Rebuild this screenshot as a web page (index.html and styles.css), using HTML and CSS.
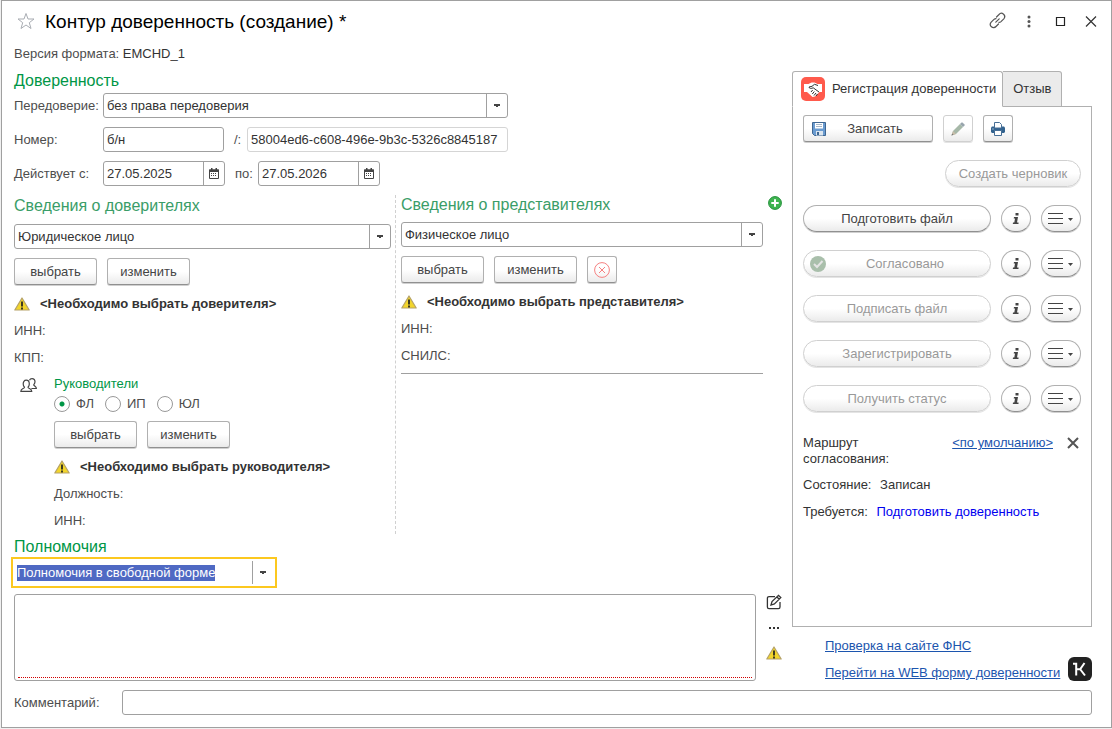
FILE: index.html
```
<!DOCTYPE html>
<html lang="ru">
<head>
  <meta charset="UTF-8" />
  <meta name="viewport" content="width=device-width, initial-scale=1.0"/>
  <title>Контур доверенность (создание)</title>
  <link rel="stylesheet" href="styles.css">
</head>
<body>

  <!-- Shared icons -->
  <svg class="sprite" aria-hidden="true">
    <symbol id="warning" viewBox="0 0 16 14">
      <path d="M8 1 L15.2 13 H.8 Z" fill="#f2d52b" stroke="#b5a268" stroke-width="1.2" stroke-linejoin="round"/>
      <path d="M7 4.5h2v5H7zM7 10.5h2v2H7z" fill="#3d3a20"/>
    </symbol>
    <symbol id="calendar" viewBox="0 0 10 11">
      <path d="M.5 2h9v8.5h-9z" fill="none" stroke="#444"/>
      <path d="M0 1.5h10V4H0zM2 0h1.5v2H2zM6.5 0H8v2H6.5z" fill="#444"/>
      <path d="M2 5.5h6M2 7.5h6" stroke="#444" stroke-dasharray="1 1"/>
    </symbol>
    <symbol id="info" viewBox="0 0 8 13">
      <path d="M3.500 0h3v2.500h-3zM2 4h4L5 9.500h1.500V11H.8L1 9.500h1.300L3 5.500H1.700z" fill="#444"/>
    </symbol>
    <symbol id="menu" viewBox="0 0 26 14">
      <path d="M0 1.500h15M0 6.500h15M0 11.500h15" stroke="#444"/>
      <path d="M20 6h5l-2.500 3z" fill="#444"/>
    </symbol>
  </svg>

  <div class="window">
    <header class="titlebar">
      <svg class="star" width="18" height="18" viewBox="0 0 18 18"><path d="M9 1.500l2 5.500h6l-4.700 3.700L14 16.500 9 13l-5 3.500 1.700-5.800L1 7h6z" fill="none" stroke="#a9adb3"/></svg>
      <h1>Контур доверенность (создание) *</h1>
      <div class="window-buttons">
        <button type="button" aria-label="Ссылка">
          <svg width="18" height="18" viewBox="0 0 18 18" fill="none" stroke="#555" stroke-width="1.200" stroke-linecap="round"><path d="M7.500 5l2.500-2.500a3 3 0 0 1 4.800 4.300L12 9.600a3 3 0 0 1-2 .8M9.500 12L7 14.500a3 3 0 0 1-4.800-4.300L5 7.400a3 3 0 0 1 2-.8M6.800 10.200l3.400-3.400"/></svg>
        </button>
        <button type="button" aria-label="Ещё">
          <svg width="18" height="18" viewBox="0 0 18 18" fill="#555"><circle cx="9" cy="5" r="1.500"/><circle cx="9" cy="9.500" r="1.500"/><circle cx="9" cy="14" r="1.500"/></svg>
        </button>
        <button type="button" aria-label="Развернуть">
          <svg width="18" height="18" viewBox="0 0 18 18"><path d="M5.500 5.500h8v8h-8z" fill="none" stroke="#222" stroke-width="1.200"/></svg>
        </button>
        <button type="button" aria-label="Закрыть">
          <svg width="18" height="18" viewBox="0 0 18 18"><path d="M4 4.500l10 10M14 4.500l-10 10" stroke="#333" stroke-width="1.200"/></svg>
        </button>
      </div>
    </header>

    <form id="poaForm">
      <div class="version">Версия формата: <span class="value">EMCHD_1</span></div>

      <div class="content">
        <div class="main">
          <h2>Доверенность</h2>
          <div class="rows">
            <div class="form-row">
              <label for="transfer">Передоверие:</label>
              <div class="combo combo-transfer">
                <select id="transfer"><option>без права передоверия</option></select>
              </div>
            </div>
            <div class="form-row">
              <label for="number">Номер:</label>
              <input class="field number" type="text" id="number" value="б/н">
              <label class="mid" for="guid">/:</label>
              <input class="field guid" type="text" id="guid" value="58004ed6-c608-496e-9b3c-5326c8845187" readonly>
            </div>
            <div class="form-row">
              <label for="dateFrom">Действует с:</label>
              <div class="field date">
                <input type="text" id="dateFrom" value="27.05.2025">
                <button type="button" aria-label="Выбрать дату начала"><svg width="10" height="11"><use href="#calendar"/></svg></button>
              </div>
              <label class="mid" for="dateTo">по:</label>
              <div class="field date">
                <input type="text" id="dateTo" value="27.05.2026">
                <button type="button" aria-label="Выбрать дату окончания"><svg width="10" height="11"><use href="#calendar"/></svg></button>
              </div>
            </div>
          </div>

          <div class="parties">
            <section class="principal">
              <h2 class="soft">Сведения о доверителях</h2>
              <div class="combo">
                <select id="principalType" aria-label="Тип доверителя"><option>Юридическое лицо</option></select>
              </div>
              <div class="buttons">
                <button type="button" class="btn">выбрать</button>
                <button type="button" class="btn">изменить</button>
              </div>
              <p class="line warn"><svg width="16" height="14"><use href="#warning"/></svg>&lt;Необходимо выбрать доверителя&gt;</p>
              <p class="line">ИНН:</p>
              <p class="line">КПП:</p>

              <div class="heads">
                <svg class="people" width="17" height="15" viewBox="0 0 17 15" fill="#fff" stroke="#444" stroke-width="1.200" stroke-linejoin="round"><path d="M9.500 2.200C10 .9 11 .6 12 .6c2 0 3 1.400 3 3.200 0 1.300-.7 2.300-1.300 3 .2 1.200 2.700 1.400 2.700 3.700h-5"/><path d="M.8 13.400c0-3 3.500-2.600 3.700-4.200C3.700 8.500 3.200 7.300 3.200 6c0-2.200 1-3.800 3-3.800S9.300 3.800 9.300 6c0 1.300-.5 2.500-1.300 3.200.2 1.600 3.800 1.200 3.800 4.200z"/></svg>
                <div>
                  <h3>Руководители</h3>
                  <div class="radios">
                    <label><input type="radio" name="head" checked>ФЛ</label>
                    <label><input type="radio" name="head">ИП</label>
                    <label><input type="radio" name="head">ЮЛ</label>
                  </div>
                  <div class="buttons">
                    <button type="button" class="btn">выбрать</button>
                    <button type="button" class="btn">изменить</button>
                  </div>
                  <p class="line warn"><svg width="16" height="14"><use href="#warning"/></svg>&lt;Необходимо выбрать руководителя&gt;</p>
                  <p class="line">Должность:</p>
                  <p class="line">ИНН:</p>
                </div>
              </div>
            </section>

            <section class="agent">
              <div class="agent-body">
                <h2 class="soft">Сведения о представителях</h2>
                <div class="combo">
                  <select id="agentType" aria-label="Тип представителя"><option>Физическое лицо</option></select>
                </div>
                <div class="buttons">
                  <button type="button" class="btn">выбрать</button>
                  <button type="button" class="btn">изменить</button>
                  <button type="button" class="btn small" aria-label="Удалить">
                    <svg width="16" height="16" viewBox="0 0 16 16" fill="none" stroke="#f58080"><circle cx="8" cy="8" r="7.400"/><path d="M5 5l6 6M11 5l-6 6"/></svg>
                  </button>
                </div>
                <p class="line warn"><svg width="16" height="14"><use href="#warning"/></svg>&lt;Необходимо выбрать представителя&gt;</p>
                <p class="line">ИНН:</p>
                <p class="line">СНИЛС:</p>
                <hr>
              </div>
              <button type="button" class="plain add" aria-label="Добавить представителя">
                <svg width="14" height="14" viewBox="0 0 14 14"><circle cx="7" cy="7" r="6.400" fill="#3fb450" stroke="#23913a"/><path d="M7 3.300v7.400M3.300 7h7.400" stroke="#fff" stroke-width="2"/></svg>
              </button>
            </section>
          </div>

          <h2>Полномочия</h2>
          <div class="powers-combo">
            <input type="text" id="powersType" aria-label="Полномочия" value="Полномочия в свободной форме">
            <button type="button" aria-label="Открыть список"></button>
          </div>
          <div class="powers">
            <div class="powers-text">
              <textarea id="powers" aria-label="Текст полномочий"></textarea>
            </div>
            <div class="powers-tools">
              <button type="button" class="plain" aria-label="Редактировать">
                <svg width="16" height="16" viewBox="0 0 16 16" fill="none" stroke="#333" stroke-width="1.300"><path d="M9 2.600H3A1.600 1.600 0 0 0 1.400 4.200V13A1.600 1.600 0 0 0 3 14.600h9.400A1.600 1.600 0 0 0 14 13V8"/><path d="M5 11l1-3.500 6.500-6.200 2.300 2.300-6.400 6.300zM11 3l2.200 2.200"/></svg>
              </button>
              <button type="button" class="plain" aria-label="Ещё">
                <svg width="16" height="16" viewBox="0 0 16 16" fill="#333"><path d="M3 7h2v2H3zM7 7h2v2H7zM11 7h2v2h-2z"/></svg>
              </button>
              <svg width="16" height="14"><use href="#warning"/></svg>
            </div>
          </div>
        </div>

        <aside>
          <div class="tabs">
            <button type="button" class="tab active">
              <svg width="24" height="24" viewBox="0 0 24 24"><rect width="24" height="24" rx="5" fill="#ff5a4c"/><path d="M3 7h4.500l3-1.500h3L16.500 7H21v8h-2.500L14 19.500l-2.500.5L6 15H3z" fill="#fff"/><path d="M17 8.500l-3.500-1.200-2.500 2L8 10c0 1.600 2.500 1.800 4.200.8L18 15M10 15l1.700-2M11.300 17l2-2.500M13 18.500l2-2.500M15 19l1.500-2" fill="none" stroke="#333"/></svg>
              Регистрация доверенности
            </button>
            <button type="button" class="tab">Отзыв</button>
          </div>
          <div class="panel">
            <div class="buttons">
              <button type="submit" class="btn save">
                <svg width="14" height="14" viewBox="0 0 14 14"><path d="M.5.500h13v13h-11l-2-2z" fill="#6a9bd0" stroke="#3f6792"/><path d="M3 1h8v5.500H3z" fill="#fff"/><path d="M4 2.500h6M4 4.500h6" stroke="#a5b6c8"/><path d="M4 9h7v4.500H4z" fill="#dce6ef"/><path d="M5 10h2v3H5z" fill="#3f6792"/></svg>
                <span>Записать</span>
              </button>
              <button type="button" class="btn small" aria-label="Изменить" disabled>
                <svg width="14" height="14" viewBox="0 0 14 14"><path d="M.5 13.500L2 9l7-7 3 3-7 7z" fill="#a6b8a8"/><path d="M9 2l1.500-1.500h1l2 2v1L12 5z" fill="#98a5ad"/><path d="M.5 13.500L2 9l3 3z" fill="#c9bda9"/><path d="M.5 13.500l.7-2 1.300 1.300z" fill="#777"/></svg>
              </button>
              <button type="button" class="btn small" aria-label="Печать">
                <svg width="14" height="14" viewBox="0 0 14 14"><path d="M1 4.500h12l1 1V10l-1 1H1l-1-1V5.500z" fill="#33638f"/><path d="M3.500.5h5l2 2V6h-7z" fill="#fff" stroke="#476f96"/><path d="M3.500 8.500h7v5h-7z" fill="#fff" stroke="#476f96"/><path d="M1.500 7h1" stroke="#fff"/></svg>
              </button>
            </div>
            <div class="buttons end">
              <button type="button" class="btn round draft" disabled>Создать черновик</button>
            </div>
            <div class="buttons">
              <button type="button" class="btn round step">Подготовить файл</button>
              <button type="button" class="btn round small" aria-label="Справка"><svg width="8" height="13"><use href="#info"/></svg></button>
              <button type="button" class="btn round list" aria-label="Меню"><svg width="26" height="14"><use href="#menu"/></svg></button>
            </div>
            <div class="buttons">
              <button type="button" class="btn round step checked" disabled>
                <svg width="16" height="16" viewBox="0 0 16 16"><circle cx="8" cy="8" r="8" fill="#a9bfab"/><path d="M4 8l3 3 5.500-6" fill="none" stroke="#e4e4e4" stroke-width="2"/></svg>
                <span>Согласовано</span>
              </button>
              <button type="button" class="btn round small" aria-label="Справка"><svg width="8" height="13"><use href="#info"/></svg></button>
              <button type="button" class="btn round list" aria-label="Меню"><svg width="26" height="14"><use href="#menu"/></svg></button>
            </div>
            <div class="buttons">
              <button type="button" class="btn round step" disabled>Подписать файл</button>
              <button type="button" class="btn round small" aria-label="Справка"><svg width="8" height="13"><use href="#info"/></svg></button>
              <button type="button" class="btn round list" aria-label="Меню"><svg width="26" height="14"><use href="#menu"/></svg></button>
            </div>
            <div class="buttons">
              <button type="button" class="btn round step" disabled>Зарегистрировать</button>
              <button type="button" class="btn round small" aria-label="Справка"><svg width="8" height="13"><use href="#info"/></svg></button>
              <button type="button" class="btn round list" aria-label="Меню"><svg width="26" height="14"><use href="#menu"/></svg></button>
            </div>
            <div class="buttons">
              <button type="button" class="btn round step" disabled>Получить статус</button>
              <button type="button" class="btn round small" aria-label="Справка"><svg width="8" height="13"><use href="#info"/></svg></button>
              <button type="button" class="btn round list" aria-label="Меню"><svg width="26" height="14"><use href="#menu"/></svg></button>
            </div>

            <div class="status">
              <div class="route">
                <span class="route-name">Маршрут согласования:</span>
                <a href="#">&lt;по умолчанию&gt;</a>
                <button type="button" class="plain" aria-label="Очистить маршрут">
                  <svg width="12" height="12" viewBox="0 0 12 12"><path d="M1 1l10 10M11 1L1 11" stroke="#555" stroke-width="2"/></svg>
                </button>
              </div>
              <p class="line">Состояние: <span>Записан</span></p>
              <p class="line">Требуется: <span class="todo">Подготовить доверенность</span></p>
            </div>
          </div>

          <div class="links">
            <div>
              <p class="line"><a href="#">Проверка на сайте ФНС</a></p>
              <p class="line"><a href="#">Перейти на WEB форму доверенности</a></p>
            </div>
            <svg width="24" height="24" viewBox="0 0 24 24"><rect width="24" height="24" rx="6" fill="#222"/><path d="M5 6.800h3.200V18.500M8.200 12.300h4.500M16.500 6l-4.300 6.300 4.800 6.200" fill="none" stroke="#fff" stroke-width="2"/></svg>
          </div>
        </aside>
      </div>

      <div class="comment">
        <label for="comment">Комментарий:</label>
        <input class="field" type="text" id="comment">
      </div>
    </form>
  </div>

  <script>
    // The powers type is ready to be retyped when the form opens
    const powersType = document.getElementById('powersType');
    powersType.focus();
    powersType.select();

    document.getElementById('poaForm').addEventListener('submit', function(event) {
      event.preventDefault();
    });
  </script>
</body>
</html>
```
FILE: styles.css
```
* {
  box-sizing: border-box;
}

body {
  font-family: "Liberation Sans", Arial, sans-serif;
  font-size: 13px;
  line-height: 16px;
  color: #4d4d4d;
  background-color: #f0f0f0;
  margin: 0;
  padding: 0 0 1px 1px;
}

.sprite {
  position: absolute;
  width: 0;
  height: 0;
}

svg {
  display: block;
  flex: none;
}

input, select, button, textarea {
  font: inherit;
  color: inherit;
}

button {
  padding: 0;
  border: none;
  background: none;
  cursor: pointer;
}

h1, h2, h3, p {
  margin: 0;
  font-weight: normal;
}

a {
  color: #1c55ae;
}

.window {
  background-color: #fff;
  border: 1px solid #a0a0a0;
  min-height: calc(100vh - 1px);
}

/* Title bar */
.titlebar {
  display: flex;
  align-items: center;
  height: 42px;
  padding: 0 11px 2px 15px;
}

.titlebar h1 {
  flex: 1;
  margin-left: 10px;
  padding-top: 2px;
  font-size: 19px;
  line-height: 24px;
  color: #000;
}

.window-buttons {
  display: flex;
  gap: 13px;
}

/* Form */
#poaForm {
  padding: 0 19px 11px 12px;
}

.version {
  padding: 3px 0 9px;
}

.value {
  color: #333;
}

.content {
  display: flex;
  gap: 5px;
}

.main {
  flex: 1;
  min-width: 0;
  padding-bottom: 5px;
}

h2 {
  font-size: 16px;
  line-height: 20px;
  color: #009646;
}

h2.soft {
  color: #3a9d68;
}

h3 {
  font-size: 13px;
  line-height: 18px;
  color: #009646;
}

.rows {
  display: flex;
  flex-direction: column;
  gap: 9px;
  margin-top: 2px;
}

.form-row {
  display: flex;
  align-items: center;
}

.form-row > label:first-child {
  width: 89px;
}

.form-row .mid {
  width: 33px;
  padding-left: 10px;
}

.field {
  height: 25px;
  padding: 0 3px;
  border: 1px solid #a0a0a0;
  border-radius: 3px;
  background-color: #fff;
  color: #333;
}

.number {
  width: 121px;
}

.guid {
  width: 261px;
  border-color: #d5d5d5;
}

.number + .mid {
  width: 23px;
}

.date {
  display: flex;
  width: 122px;
  padding: 0;
}

.date input {
  flex: 1;
  min-width: 0;
  padding: 0 3px;
  border: none;
  background: none;
}

.date button {
  display: flex;
  align-items: center;
  justify-content: center;
  width: 21px;
  border-left: 1px solid #a0a0a0;
}

/* The arrow cell lies on the right end of the select */
.combo {
  display: grid;
  grid-template-columns: 1fr 21px;
  height: 25px;
  border: 1px solid #a0a0a0;
  border-radius: 3px;
  color: #333;
}

.combo select {
  grid-area: 1 / 1 / 2 / 3;
  appearance: none;
  padding: 0 24px 0 3px;
  border: none;
  background: none;
}

.combo::after {
  content: "";
  grid-area: 1 / 2 / 2 / 3;
  pointer-events: none;
}

.combo::after,
.powers-combo button {
  border-left: 1px solid #a0a0a0;
  background: conic-gradient(from -60deg at 50% 100%, #444 120deg, transparent 0) 7px center / 6px 3px no-repeat;
}

.combo-transfer {
  width: 405px;
}

/* Buttons */
.buttons {
  display: flex;
  gap: 10px;
}

.btn {
  display: flex;
  align-items: center;
  justify-content: center;
  width: 83px;
  height: 27px;
  padding-top: 1px;
  border: 1px solid #b0b0b0;
  border-bottom-color: #909090;
  border-radius: 3px;
  box-shadow: 0 1px 0 #d0d0d0;
  background: linear-gradient(#fff 50%, #ebebeb);
  color: #444;
}

.btn:disabled {
  border-color: #d0d0d0;
  box-shadow: 0 1px 0 #e4e4e4;
  color: #999;
}

.btn.small {
  width: 30px;
}

.btn.round {
  border-radius: 14px;
}

.plain {
  display: flex;
  align-items: center;
  justify-content: center;
}

/* Principal and agent */
.parties {
  display: grid;
  grid-template-columns: 380fr 389fr;
  margin-top: 9px;
}

.principal {
  min-width: 0;
  padding: 1px 4px 0 0;
  border-right: 1px dashed #d0d0d0;
}

.principal > .combo {
  margin-top: 8px;
}

.agent {
  display: flex;
  align-items: flex-start;
  min-width: 0;
  padding-left: 5px;
}

.agent-body {
  flex: 1;
  min-width: 0;
}

.agent .combo {
  margin-top: 7px;
}

.add {
  width: 22px;
  height: 16px;
  margin-right: 2px;
  padding-left: 2px;
}

.parties .buttons {
  margin-top: 9px;
}

.line {
  line-height: 27px;
}

.parties .buttons + .line {
  margin-top: 5px;
}

.warn {
  display: flex;
  align-items: center;
  gap: 10px;
  font-weight: bold;
  color: #333;
}

.agent hr {
  margin: 4px 0 0;
  border: none;
  border-top: 1px solid #a0a0a0;
}

.heads {
  display: flex;
  gap: 17px;
  margin-top: 4px;
  padding-left: 6px;
}

.people {
  margin-top: 3px;
}

.radios {
  display: flex;
  gap: 11px;
  height: 22px;
}

.radios label {
  display: flex;
  align-items: center;
  gap: 6px;
}

.radios input {
  appearance: none;
  width: 16px;
  height: 16px;
  margin: 0;
  border: 1px solid #999;
  border-radius: 50%;
}

.radios input:checked {
  background: radial-gradient(#009646 2px, #fff 3px);
}

.heads .buttons {
  margin-top: 6px;
}

/* Powers */
.parties + h2 {
  margin-top: 3px;
}

.powers-combo {
  display: flex;
  align-items: center;
  width: 266px;
  height: 31px;
  margin-left: -3px;
  border: 2px solid #fcc81f;
  background-color: #fff;
}

.powers-combo input {
  flex: 1;
  min-width: 0;
  padding: 0 4px;
  border: none;
  outline: none;
}

.powers-combo input::selection {
  background-color: #4f69c3;
  color: #fff;
}

.powers-combo button {
  width: 23px;
  height: 23px;
}

.powers {
  display: flex;
  margin-top: 6px;
}

.powers-text {
  flex: 1;
  height: 87px;
  padding: 2px 3px;
  border: 1px solid #a0a0a0;
  border-radius: 3px;
}

.powers-text textarea {
  display: block;
  width: 100%;
  height: 100%;
  padding: 0;
  border: none;
  border-bottom: 1px dotted #d00000;
  border-radius: 0;
  outline: none;
  resize: none;
}

.powers-tools {
  display: flex;
  flex-direction: column;
  align-items: center;
  gap: 10px;
  width: 31px;
  padding-left: 5px;
}

/* Registration panel */
aside {
  display: flex;
  flex-direction: column;
  width: 300px;
}

.tabs {
  display: flex;
}

.tab {
  display: flex;
  align-items: center;
  gap: 7px;
  height: 36px;
  margin-bottom: -1px;
  padding: 0 10px;
  border: 1px solid #b0b0b0;
  border-left: none;
  border-radius: 0 3px 0 0;
  background-color: #ebebeb;
  color: #333;
}

.tab.active {
  z-index: 1;
  padding: 0 6px 0 8px;
  border-left: 1px solid #b0b0b0;
  border-bottom-color: #fff;
  border-radius: 3px 3px 0 0;
  background-color: #fff;
}

.panel {
  display: flex;
  flex-direction: column;
  flex: 1;
  gap: 18px;
  padding: 8px 10px;
  border: 1px solid #b0b0b0;
}

.save {
  width: 130px;
  padding: 0 8px;
}

.save span, .checked span {
  flex: 1;
}

.end {
  justify-content: flex-end;
}

.draft {
  width: 136px;
}

.step {
  flex: 1;
}

.checked {
  padding: 0 6px;
}

.btn.list {
  width: 40px;
}

.status {
  margin-top: 5px;
  color: #333;
}

.route {
  display: flex;
  align-items: flex-start;
  margin-bottom: 4px;
}

.route-name {
  width: 100px;
}

.route a {
  margin-left: auto;
}

.route .plain {
  width: 16px;
  height: 16px;
  margin-left: 12px;
}

.status .line span {
  margin-left: 5px;
}

.status .todo {
  color: #0000f0;
}

.links {
  display: flex;
  align-items: flex-end;
  justify-content: space-between;
  padding: 5px 0 0 33px;
}

.links > svg {
  margin-bottom: 5px;
}

.comment {
  display: flex;
  align-items: center;
  margin-top: 4px;
}

.comment label {
  width: 108px;
}

.comment input {
  flex: 1;
}
```
